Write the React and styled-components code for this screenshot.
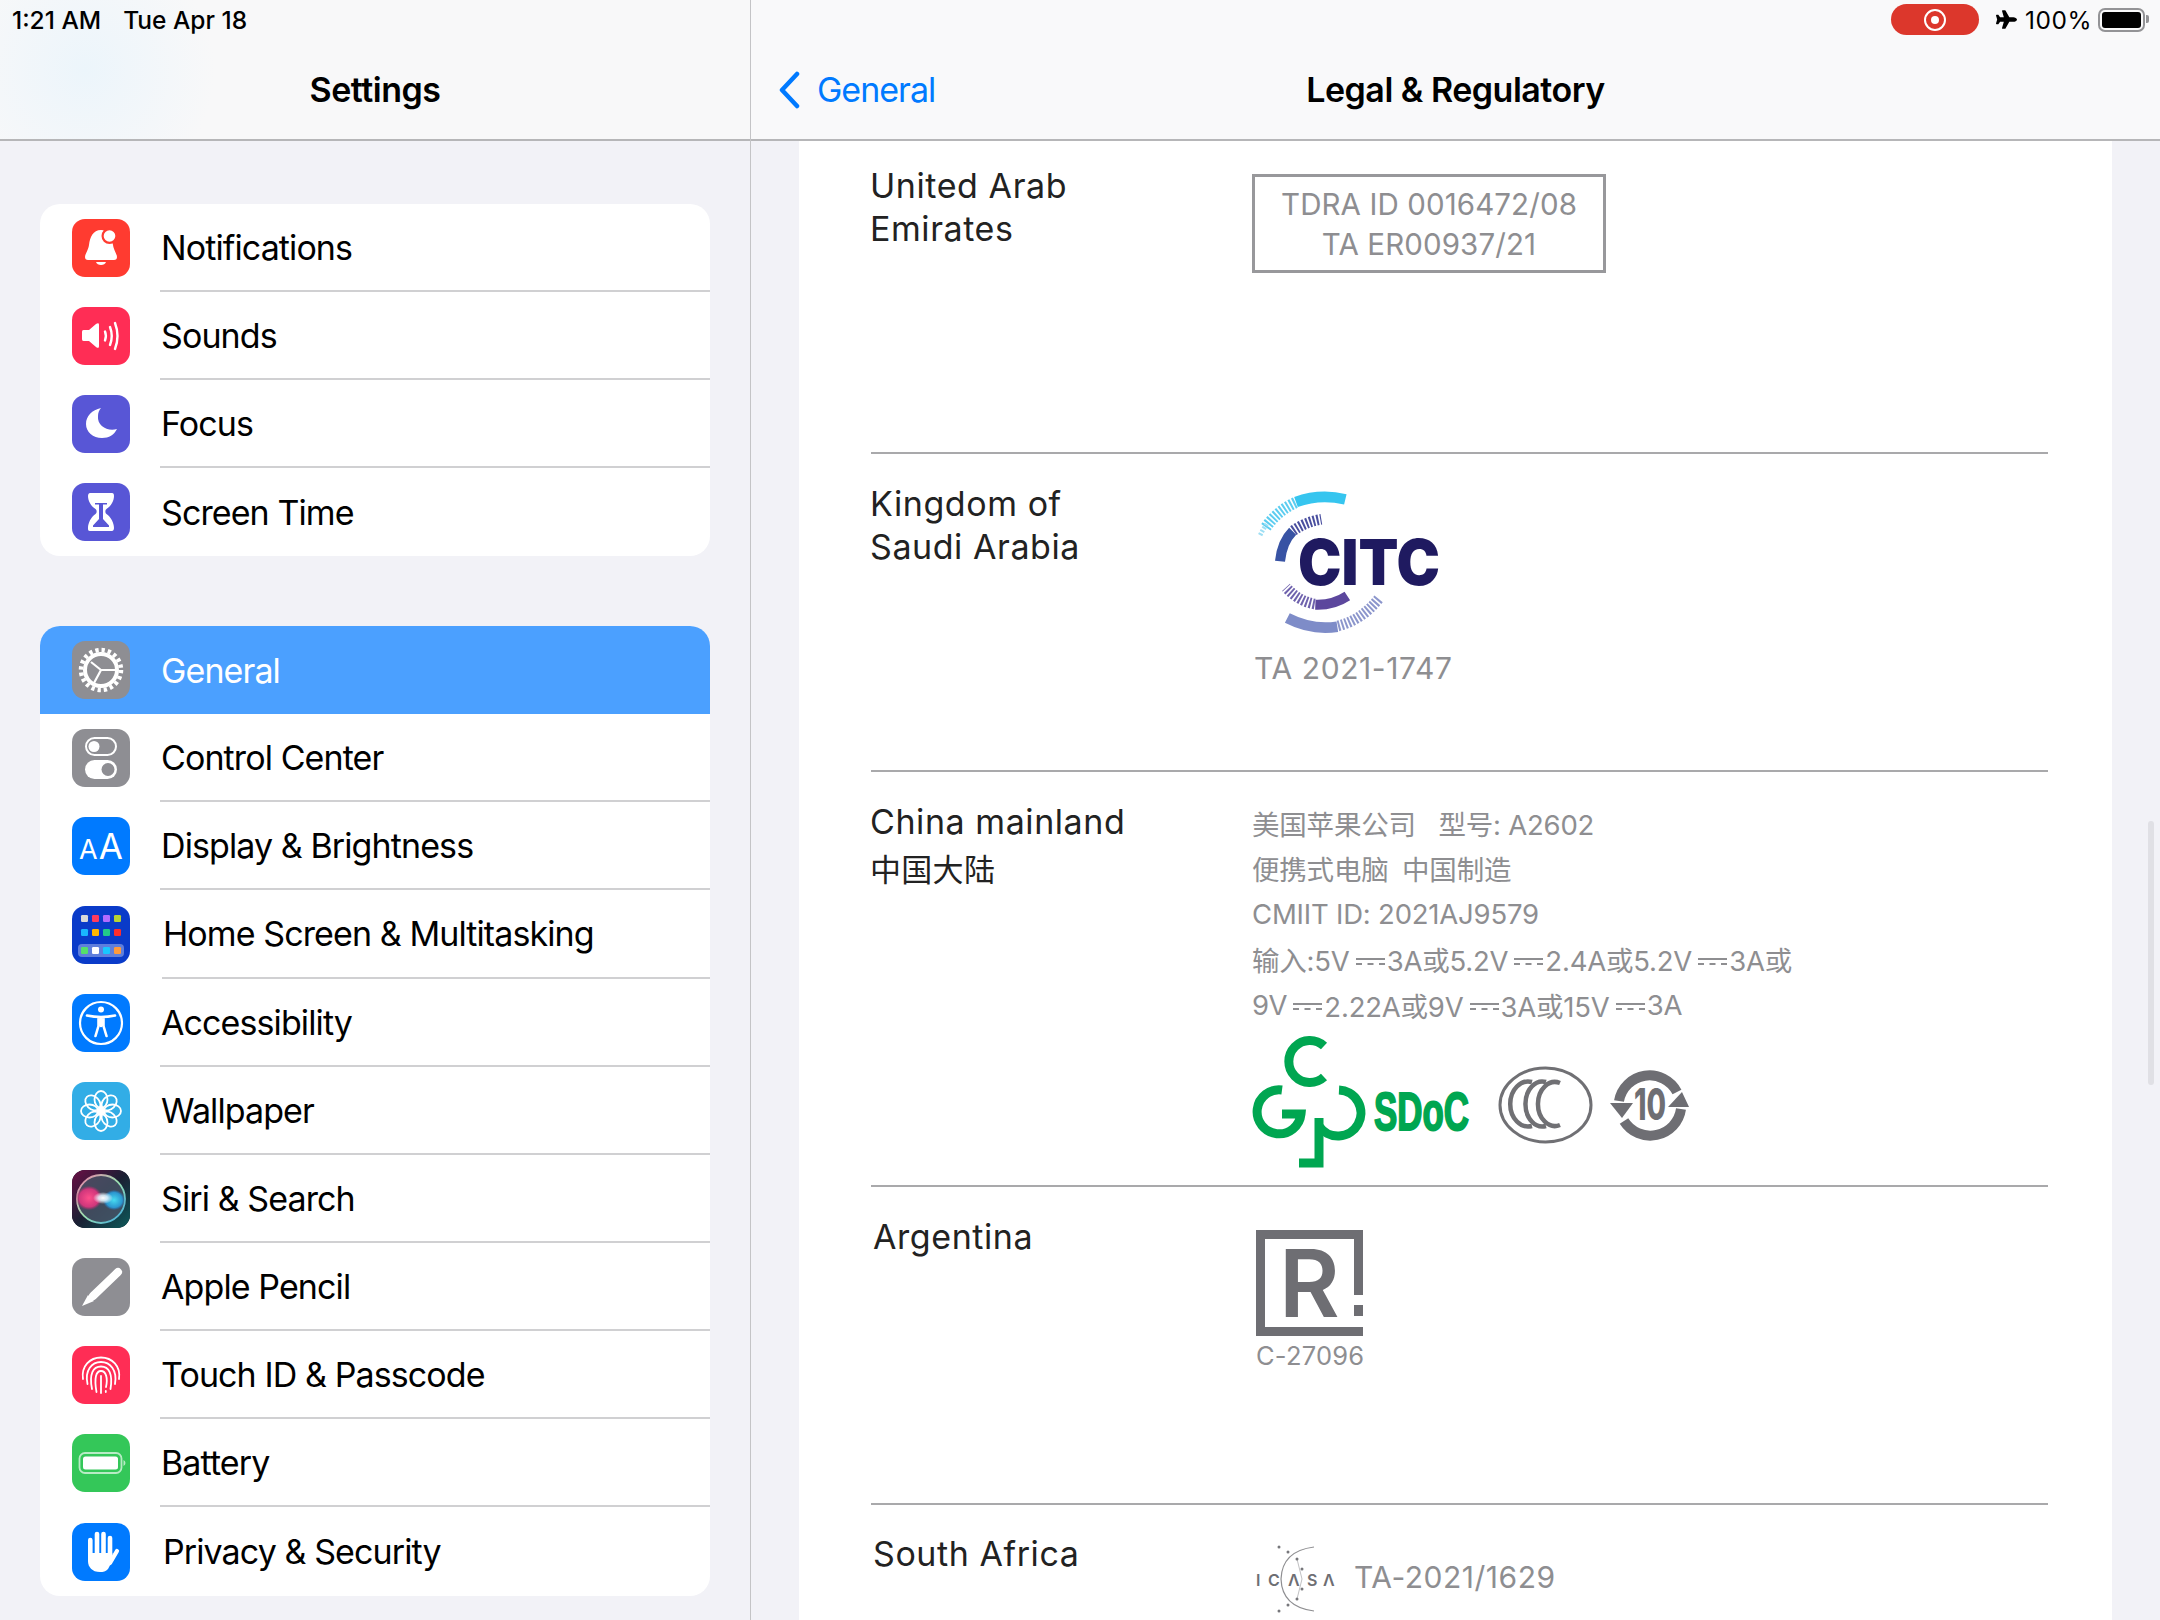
import React from 'react'
import styled, { createGlobalStyle } from 'styled-components'
import { FaPlane } from 'react-icons/fa'

const GlobalStyle = createGlobalStyle`
  html, body { margin: 0; padding: 0; background: #f2f2f7; }
  * { box-sizing: border-box; }
`

const Screen = styled.div`
  position: relative;
  display: flex;
  width: 2160px;
  height: 1620px;
  overflow: hidden;
  background: #f2f2f7;
  font-family: Inter, "Noto Sans CJK SC", sans-serif;
  color: #000;
`
const Sidebar = styled.aside`
  width: 751px;
  flex: none;
  border-right: 1px solid #c4c4c6;
`
const Detail = styled.main`
  flex: 1;
  min-width: 0;
`
const Header = styled.header`
  height: 141px;
  border-bottom: 2px solid #b6b6b8;
  background: ${p => p.$tint
    ? 'radial-gradient(ellipse 130px 130px at 85px 70px, #ecf5fb 0%, rgba(240,246,250,0) 100%), #f8f8f9'
    : '#f9f9fa'};
`
const StatusLine = styled.div`
  height: 40px;
  display: flex;
  align-items: center;
  justify-content: ${p => (p.$end ? 'flex-end' : 'flex-start')};
  padding: ${p => (p.$end ? '0 10px 0 0' : '0 0 0 12px')};
  font-size: 24.5px;
  font-weight: 500;
  letter-spacing: 0;
`
const Clock = styled.span`
  margin-right: 22px;
`
const RecPill = styled.div`
  width: 88px;
  height: 31px;
  margin: -1px 17px 0 0;
  border-radius: 16px;
  background: #dc372c;
  display: flex;
  align-items: center;
  justify-content: center;
`
const RecDot = styled.div`
  width: 22px;
  height: 22px;
  border-radius: 50%;
  border: 2px solid #fff;
  display: flex;
  align-items: center;
  justify-content: center;
  &::after {
    content: '';
    width: 8px;
    height: 8px;
    border-radius: 50%;
    background: #fff;
  }
`
const Plane = styled(FaPlane)`
  width: 21px;
  height: 21px;
  margin: -1px 8px 0 0;
`
const Percent = styled.span`
  margin: 0 6px 0 0;
  font-weight: 400;
  letter-spacing: 0.5px;
`
const BatteryOutline = styled.div`
  position: relative;
  width: 47px;
  height: 24px;
  padding: 2px;
  border: 2px solid #939396;
  border-radius: 7px;
  margin-right: 5px;
  &::before {
    content: '';
    display: block;
    height: 100%;
    background: #000;
    border-radius: 3px;
  }
  &::after {
    content: '';
    position: absolute;
    right: -6px;
    top: 5px;
    width: 3px;
    height: 8px;
    background: #939396;
    border-radius: 0 2px 2px 0;
  }
`
const NavRow = styled.div`
  height: 99px;
  display: grid;
  grid-template-columns: 1fr auto 1fr;
  align-items: center;
`
const NavTitle = styled.h1`
  grid-column: 2;
  margin: 0;
  font-size: 34px;
  font-weight: 600;
  letter-spacing: -0.5px;
`
const BackLink = styled.a`
  grid-column: 1;
  display: flex;
  align-items: center;
  padding-left: 27px;
  gap: 17px;
  font-size: 34px;
  letter-spacing: -1px;
  color: #007aff;
`
const Groups = styled.div`
  display: flex;
  flex-direction: column;
  gap: 70px;
  padding: 63px 40px 0;
`
const Group = styled.section`
  background: #fff;
  border-radius: 20px;
  overflow: hidden;
`
const Row = styled.div`
  height: ${p => p.$h || 88}px;
  display: flex;
  align-items: center;
  padding-left: 32px;
  background: ${p => (p.$active ? '#4ba0ff' : 'transparent')};
  color: ${p => (p.$active ? '#fff' : '#000')};
`
const IconTile = styled.div`
  width: 58px;
  height: 58px;
  flex: none;
  border-radius: 13px;
  overflow: hidden;
  background: ${p => p.$bg};
  display: flex;
  align-items: baseline;
  justify-content: center;
  svg { display: block; }
`
const RowBody = styled.div`
  flex: 1;
  align-self: stretch;
  display: flex;
  align-items: center;
  margin-left: ${p => 30 + (p.$nudge || 0)}px;
  border-bottom: ${p => (p.$last ? '0' : '2px solid #d0d0d2')};
  font-size: 34px;
  letter-spacing: -0.9px;
  padding-left: 1px;
`
const SmallA = styled.span`
  color: #fff;
  font-size: 27px;
  line-height: 58px;
  margin-right: 1px;
`
const BigA = styled.span`
  color: #fff;
  font-size: 35px;
  line-height: 58px;
`
const Page = styled.div`
  margin: 0 48px 0 48px;
  background: #fff;
  height: 1480px;
  padding: 0 64px 0 72px;
`
const Entry = styled.section`
  height: ${p => p.$h}px;
  padding-top: ${p => p.$top}px;
  border-bottom: ${p => (p.$open ? '0' : '2px solid #a9a9ab')};
  display: grid;
  grid-template-columns: 381px 1fr;
  align-items: start;
`
const Region = styled.div`
  margin-left: ${p => (p.$nudge ? 2 : -1)}px;
  font-size: 34px;
  line-height: 42.5px;
  letter-spacing: 0.57px;
  color: #222;
`
const CjkRegion = styled.div`
  margin-top: 3px;
  font-family: "Noto Sans CJK SC", sans-serif;
  font-size: 31px;
  letter-spacing: 0.3px;
`
const CertBox = styled.div`
  margin-top: 9px;
  width: 354px;
  height: 99px;
  border: 3px solid #98989b;
  display: flex;
  flex-direction: column;
  align-items: center;
  justify-content: center;
  font-size: 29.5px;
  line-height: 40px;
  color: #8e8e91;
  letter-spacing: 0.1px;
`
const LogoStack = styled.div`
  margin: ${p => p.$top}px 0 0 ${p => p.$left}px;
  display: flex;
  flex-direction: column;
  align-items: flex-start;
  svg { display: block; overflow: visible; }
`
const CertNumber = styled.div`
  margin: 14px 0 0 -2px;
  font-size: 30px;
  line-height: 36px;
  color: #8e8e91;
  letter-spacing: 0.6px;
`
const SmallNumber = styled.div`
  margin-top: 5px;
  font-size: 25.5px;
  line-height: 30px;
  letter-spacing: 0.2px;
  color: #8e8e91;
`
const LegalBlock = styled.div`
  margin-top: -1px;
`
const LegalLine = styled.div`
  height: 45.5px;
  display: flex;
  align-items: center;
  font-size: 27.5px;
  letter-spacing: -0.2px;
  color: #8e8e91;
  white-space: pre;
  font-family: Inter, "Noto Sans CJK SC", sans-serif;
`
const DcMark = styled.span`
  display: inline-block;
  width: 29px;
  height: 7px;
  margin: 4px 2px 0 6px;
  border-top: 2px solid #8e8e91;
  border-bottom: 2px dashed #8e8e91;
`
const LogoStrip = styled.div`
  display: flex;
  align-items: flex-start;
  margin: 8px 0 0 3px;
  svg { display: block; flex: none; overflow: visible; }
`
const StripItem = styled.div`
  flex: none;
  margin: ${p => p.$top}px 0 0 ${p => p.$left}px;
`
const InlineLogo = styled.div`
  margin: 12px 0 0 4px;
  display: flex;
  align-items: flex-start;
  svg { display: block; flex: none; overflow: visible; }
`
const InlineNumber = styled.div`
  margin: 14px 0 0 16px;
  font-size: 30px;
  line-height: 36px;
  color: #8e8e91;
  letter-spacing: 0.5px;
`
const ScrollThumb = styled.div`
  position: absolute;
  left: 2148px;
  top: 821px;
  width: 6px;
  height: 264px;
  border-radius: 3px;
  background: #e0e0e5;
`

const Tile = ({ bg, children }) => (
  <IconTile $bg={bg}>
    <svg width="58" height="58" viewBox="0 0 58 58">{children}</svg>
  </IconTile>
)

const BellIcon = () => (
  <Tile bg="#ff3b30">
    <path fill="#fff" d="M29 11C21 11 18 18 17 26C16 32 13 35 13 38C13 40 14 41 16 41H42C44 41 45 40 45 38C45 35 42 32 41 26C40 18 37 11 29 11Z" />
    <path fill="#fff" d="M24 43H34C33 47 25 47 24 43Z" />
    <circle cx="37.500" cy="17" r="8" fill="#ff3b30" />
    <circle cx="37.500" cy="17" r="5.800" fill="#fff" />
  </Tile>
)
const SoundIcon = () => (
  <Tile bg="#ff2d55">
    <path fill="#fff" d="M10 25C10 23 11 23 13 23H17L24 17C26 15.500 27 16 27 18V39C27 41 26 41.500 24 40L17 34H13C11 34 10 34 10 32Z" />
    <g fill="none" stroke="#fff" strokeWidth="2.400" strokeLinecap="round">
      <path d="M33 24.500Q34.800 29 33 33.500" />
      <path d="M38 20Q41.500 29 38 38" />
      <path d="M43 16Q48 29 43 42" />
    </g>
  </Tile>
)
const MoonIcon = () => (
  <Tile bg="#5856d6">
    <path fill="#fff" d="M29 13C20 15 14 21 14 29C14 37 21 43 30 43C37 43 42 40 45 34C36 37 25 31 26 21C26 18 27 15 29 13Z" />
  </Tile>
)
const HourglassIcon = () => (
  <Tile bg="#5856d6">
    <path fill="#fff" d="M18 10H40C41.500 10 42 11 42 13C42 18 39 23 34.500 26C33 27 33 30 34.500 31C39 34 42 40 42 45C42 47 41 48 40 48H18C16 48 16 47 16 45C16 40 19 34 23.500 31C25 30 25 27 23.500 26C19 23 16 18 16 13C16 11 17 10 18 10Z" />
    <path fill="#5856d6" d="M23 20H35V21.500H31V36L37 42.500V44H21V42.500L27 36V21.500H23Z" />
  </Tile>
)
const GearIcon = () => (
  <Tile bg="#8e8e93">
    <g fill="none" stroke="#fff">
      <circle cx="29" cy="29" r="20" strokeWidth="4.500" strokeDasharray="3.300 2.980" />
      <circle cx="29" cy="29" r="16" strokeWidth="4" />
      <path strokeWidth="2.200" d="M29 29L19 21M29 29L43 29M29 29L22 42" />
    </g>
  </Tile>
)
const ControlIcon = () => (
  <Tile bg="#8e8e93">
    <rect x="14" y="9" width="30" height="17" rx="8.500" fill="none" stroke="#fff" strokeWidth="2" />
    <circle cx="22" cy="17.500" r="5.500" fill="#fff" />
    <rect x="13" y="31" width="32" height="19" rx="9.500" fill="#fff" />
    <circle cx="36" cy="40.500" r="6.500" fill="#8e8e93" />
  </Tile>
)
const homeCells = [
  ['#d9d9d9', '#ff3b5c', '#b36bff', '#b6d433'],
  ['#19b5ff', '#ffb800', '#22c98a', '#ff2d2d'],
  ['#55e06a', '#ffffff', '#19c8ff', '#ff9a3c'],
]
const HomeIcon = () => (
  <Tile bg="#0a3bc9">
    <rect x="6" y="38" width="46" height="13" rx="4" fill="#fff" opacity="0.35" />
    {homeCells.map((cells, r) =>
      cells.map((c, i) => (
        <rect key={r + '-' + i} x={9 + i * 11} y={[9, 23, 41][r]} width="7" height="7" rx="1.200" fill={c} />
      ))
    )}
  </Tile>
)
const AccessIcon = () => (
  <Tile bg="#007aff">
    <circle cx="29" cy="29" r="21" fill="none" stroke="#fff" strokeWidth="2.200" />
    <circle cx="29" cy="15.500" r="3" fill="#fff" />
    <path fill="none" stroke="#fff" strokeWidth="2.600" strokeLinecap="round" strokeLinejoin="round" d="M15 21.500Q29 24.500 43 21.500M29 23V32M26.500 23.500V32L23.500 42M31.500 23.500V32L34.500 42" />
  </Tile>
)
const petals = [0, 45, 90, 135, 180, 225, 270, 315]
const WallpaperIcon = () => (
  <Tile bg="#32ade6">
    <g fill="none" stroke="#fff" strokeWidth="1.800">
      {petals.map(a => (
        <ellipse key={a} cx="29" cy="17.500" rx="6.500" ry="8.500" transform={`rotate(${a} 29 29)`} />
      ))}
    </g>
    <circle cx="29" cy="29" r="3.500" fill="#fff" />
  </Tile>
)
const SiriIcon = () => (
  <Tile bg="#141a2a">
    <defs>
      <linearGradient id="siriBg" x1="0" y1="0" x2="1" y2="1">
        <stop offset="0" stopColor="#6b0f45" />
        <stop offset="0.5" stopColor="#1a1f33" />
        <stop offset="1" stopColor="#0d5a5a" />
      </linearGradient>
      <linearGradient id="siriRing" x1="0" y1="0" x2="1" y2="1">
        <stop offset="0" stopColor="#f07aa8" />
        <stop offset="0.5" stopColor="#9be0b0" />
        <stop offset="1" stopColor="#3aa6e0" />
      </linearGradient>
      <radialGradient id="siriCore">
        <stop offset="0" stopColor="#fff" />
        <stop offset="0.45" stopColor="#e6f7ff" stopOpacity="0.85" />
        <stop offset="1" stopColor="#fff" stopOpacity="0" />
      </radialGradient>
      <radialGradient id="siriPink">
        <stop offset="0" stopColor="#ff4f8b" />
        <stop offset="0.75" stopColor="#e0357f" stopOpacity="0.9" />
        <stop offset="1" stopColor="#c02a70" stopOpacity="0.1" />
      </radialGradient>
      <radialGradient id="siriCyan">
        <stop offset="0" stopColor="#48dcf0" />
        <stop offset="0.75" stopColor="#2a9fdc" stopOpacity="0.9" />
        <stop offset="1" stopColor="#1c7fd0" stopOpacity="0.1" />
      </radialGradient>
    </defs>
    <rect width="58" height="58" fill="url(#siriBg)" />
    <circle cx="29" cy="29" r="24" fill="#4a5568" opacity="0.8" />
    <circle cx="29" cy="29" r="24" fill="none" stroke="url(#siriRing)" strokeWidth="1.800" />
    <ellipse cx="17" cy="28" rx="13" ry="12" fill="url(#siriPink)" />
    <ellipse cx="42" cy="30" rx="11" ry="10" fill="url(#siriCyan)" />
    <ellipse cx="31" cy="28" rx="10" ry="6" fill="url(#siriCore)" />
  </Tile>
)
const PencilIcon = () => (
  <Tile bg="#8e8e93">
    <path d="M46 14L21 38" fill="none" stroke="#fff" strokeWidth="8" strokeLinecap="round" />
    <path d="M16 37L22 43L10 48Z" fill="#fff" />
  </Tile>
)
const TouchIcon = () => (
  <Tile bg="#ff2d55">
    <g fill="none" stroke="#fff" strokeWidth="1.800" strokeLinecap="round">
      <path d="M11 33C9 20 18 11.500 29 11.500C40 11.500 49 20 47 33" />
      <path d="M15.500 38C12.500 24 20 16 29 16C38 16 45.500 24 43 38" />
      <path d="M20 43C17 28 21 20.500 29 20.500C37 20.500 41 28 38.500 43" />
      <path d="M24.500 46C22 32 24 25 29 25C34 25 36 32 34 41M33.800 45V46" />
      <path d="M29 30V47" />
    </g>
  </Tile>
)
const BatteryIcon = () => (
  <Tile bg="#34c759">
    <rect x="7.500" y="19" width="42" height="20" rx="5.500" fill="none" stroke="#fff" strokeOpacity="0.65" strokeWidth="1.800" />
    <rect x="11" y="22.500" width="35" height="13" rx="2.500" fill="#fff" />
    <path d="M51.500 26V32Q53.500 31 53.500 29Q53.500 27 51.500 26Z" fill="#fff" fillOpacity="0.65" />
  </Tile>
)
const HandIcon = () => (
  <Tile bg="#007aff">
    <g fill="none" stroke="#fff" strokeWidth="4.600" strokeLinecap="round">
      <path d="M18.300 17V34" />
      <path d="M25 11V30" />
      <path d="M31.500 11V30" />
      <path d="M38 15V34" />
      <path d="M38 40L45 28" strokeWidth="4.200" />
    </g>
    <path fill="#fff" d="M16 30H40.300V38L36 46C34 48.500 31 49 28 49C20 49 16 44 16 38Z" />
  </Tile>
)
const AaIcon = () => (
  <IconTile $bg="#007aff">
    <SmallA>A</SmallA>
    <BigA>A</BigA>
  </IconTile>
)

const citcDash = { fill: 'none', strokeDasharray: '6 5' }
const CitcLogo = () => (
  <svg width="186" height="146" viewBox="0 0 558 438">
    <g transform="translate(-78 -58)">
      <path d="M198 94Q270 68 346 86" fill="none" stroke="#36c5ef" strokeWidth="32" />
      <path d="M196 96Q140 122 106 172" {...citcDash} stroke="#5ccdf0" strokeWidth="34" />
      <path d="M110 160Q100 174 88 198" {...citcDash} stroke="#9fdff4" strokeWidth="14" />
      <path d="M150 272Q156 214 188 182" fill="none" stroke="#3853a4" strokeWidth="30" />
      <path d="M190 180Q226 154 274 146" {...citcDash} stroke="#4a4f9f" strokeWidth="32" />
      <path d="M256 402Q310 404 352 376" fill="none" stroke="#5c479d" strokeWidth="30" />
      <path d="M254 400Q206 392 168 350" {...citcDash} stroke="#6f62ad" strokeWidth="32" />
      <path d="M172 442Q246 480 322 468" fill="none" stroke="#7e8cc8" strokeWidth="32" />
      <path d="M324 466Q396 448 448 382" {...citcDash} stroke="#8c96cc" strokeWidth="32" />
      <text x="204" y="344" fontFamily="Inter, sans-serif" fontWeight="900" fontSize="190" fill="#1f1a60" textLength="426" lengthAdjust="spacingAndGlyphs">CITC</text>
    </g>
  </svg>
)
const GreenMark = () => (
  <svg width="110" height="134" viewBox="0 0 110 134">
    <g fill="none" stroke="#00a651" strokeWidth="9">
      <path d="M69 10A21 21 0 1 0 69 41" />
      <path d="M27 54A22 22 0 1 0 46 78H27" />
      <path d="M84 54A23 23 0 1 1 64 90" />
      <path d="M64 82V127H44" />
    </g>
  </svg>
)
const SdocLogo = () => (
  <svg width="96" height="40" viewBox="0 0 96 40">
    <text x="0" y="39" fontFamily="Liberation Sans, sans-serif" fontWeight="700" fontSize="53" fill="#00a651" stroke="#00a651" strokeWidth="2" textLength="95" lengthAdjust="spacingAndGlyphs">SDoC</text>
  </svg>
)
const CccLogo = () => (
  <svg width="95" height="78" viewBox="0 0 95 78">
    <ellipse cx="47.500" cy="39" rx="45.500" ry="37" fill="none" stroke="#707074" strokeWidth="3" />
    <g fill="none" stroke="#707074" strokeWidth="4.500">
      <path d="M34 16A18 22.500 0 1 0 34 60" />
      <path d="M48 16A17 22.500 0 1 0 48 60" />
      <path d="M62 17A17 22 0 1 0 62 59" />
    </g>
  </svg>
)
const TenLogo = () => (
  <svg width="80" height="76" viewBox="0 0 80 76">
    <g fill="none" stroke="#6e6e73" strokeWidth="10">
      <path d="M9 33A31 31 0 0 1 67 24" />
      <path d="M71 41A31 31 0 0 1 14 53" />
    </g>
    <path d="M0 35H23L12 50Z" fill="#6e6e73" />
    <path d="M79 39H58L72 24Z" fill="#6e6e73" />
    <text x="40" y="52" textAnchor="middle" fontFamily="Inter, sans-serif" fontWeight="800" fontSize="44" fill="#6e6e73" textLength="32" lengthAdjust="spacingAndGlyphs">10</text>
  </svg>
)
const RLogo = () => (
  <svg width="107" height="106" viewBox="0 0 107 106">
    <path fill="#6e6e73" d="M0 0H107V65H98V9H9V97H107V106H0Z" />
    <rect x="98" y="75" width="9" height="11" fill="#6e6e73" />
    <text x="23" y="87" fontFamily="Inter, sans-serif" fontWeight="600" fontSize="93" fill="#6e6e73">R</text>
  </svg>
)
const IcasaLogo = () => (
  <svg width="82" height="68" viewBox="0 0 82 68">
    <path d="M58 2Q26 6 25 34Q26 62 58 66" fill="none" stroke="#8e8e91" strokeWidth="1.200" />
    <path d="M41 14L46 34L41 54" fill="none" stroke="#b0b0b3" strokeWidth="0.800" />
    <g fill="#77777b">
      <circle cx="23" cy="2" r="1.500" />
      <circle cx="32" cy="7" r="1.500" />
      <circle cx="41" cy="14" r="1.500" />
      <circle cx="46" cy="24" r="1.500" />
      <circle cx="46" cy="44" r="1.500" />
      <circle cx="41" cy="54" r="1.500" />
      <circle cx="32" cy="60" r="1.500" />
      <circle cx="23" cy="66" r="1.500" />
    </g>
    <g fontFamily="Inter, sans-serif" fontWeight="600" fontSize="16" fill="#6e6e73">
      <text x="0" y="41">I</text>
      <text x="12" y="41">C</text>
      <text x="32" y="41">Λ</text>
      <text x="51" y="41">S</text>
      <text x="67" y="41">Λ</text>
    </g>
  </svg>
)

const topRows = [
  { label: 'Notifications', Icon: BellIcon },
  { label: 'Sounds', Icon: SoundIcon },
  { label: 'Focus', Icon: MoonIcon },
  { label: 'Screen Time', Icon: HourglassIcon, last: true },
]
const mainRows = [
  { label: 'General', Icon: GearIcon, active: true, last: true },
  { label: 'Control Center', Icon: ControlIcon },
  { label: 'Display & Brightness', Icon: AaIcon },
  { label: 'Home Screen & Multitasking', Icon: HomeIcon, nudge: 2, h: 89 },
  { label: 'Accessibility', Icon: AccessIcon },
  { label: 'Wallpaper', Icon: WallpaperIcon },
  { label: 'Siri & Search', Icon: SiriIcon },
  { label: 'Apple Pencil', Icon: PencilIcon },
  { label: 'Touch ID & Passcode', Icon: TouchIcon },
  { label: 'Battery', Icon: BatteryIcon },
  { label: 'Privacy & Security', Icon: HandIcon, nudge: 2, h: 89, last: true },
]

const SettingsGroup = ({ rows }) => (
  <Group>
    {rows.map(({ label, Icon, active, last, nudge, h }) => (
      <Row key={label} $active={active} $h={h}>
        <Icon />
        <RowBody $last={last} $nudge={nudge}>{label}</RowBody>
      </Row>
    ))}
  </Group>
)

export default function App() {
  return (
    <Screen>
      <GlobalStyle />
      <Sidebar>
        <Header $tint>
          <StatusLine>
            <Clock>1:21 AM</Clock>
            <span>Tue Apr 18</span>
          </StatusLine>
          <NavRow>
            <NavTitle>Settings</NavTitle>
          </NavRow>
        </Header>
        <Groups>
          <SettingsGroup rows={topRows} />
          <SettingsGroup rows={mainRows} />
        </Groups>
      </Sidebar>
      <Detail>
        <Header>
          <StatusLine $end>
            <RecPill><RecDot /></RecPill>
            <Plane />
            <Percent>100%</Percent>
            <BatteryOutline />
          </StatusLine>
          <NavRow>
            <BackLink>
              <svg width="22" height="38" viewBox="0 0 22 38">
                <path d="M19 3L4 19L19 35" fill="none" stroke="#007aff" strokeWidth="4.500" strokeLinecap="round" strokeLinejoin="round" />
              </svg>
              General
            </BackLink>
            <NavTitle>Legal &amp; Regulatory</NavTitle>
          </NavRow>
        </Header>
        <Page>
          <Entry $h={313} $top={24}>
            <Region>United Arab<br />Emirates</Region>
            <CertBox>
              <div>TDRA ID 0016472/08</div>
              <div>TA ER00937/21</div>
            </CertBox>
          </Entry>
          <Entry $h={318} $top={29}>
            <Region>Kingdom of<br />Saudi Arabia</Region>
            <LogoStack $top={7} $left={4}>
              <CitcLogo />
              <CertNumber>TA 2021-1747</CertNumber>
            </LogoStack>
          </Entry>
          <Entry $h={415} $top={29}>
            <Region>
              China mainland
              <CjkRegion>中国大陆</CjkRegion>
            </Region>
            <LegalBlock>
              <LegalLine>美国苹果公司   型号: A2602</LegalLine>
              <LegalLine>便携式电脑{'\u2002'}中国制造</LegalLine>
              <LegalLine>CMIIT ID: 2021AJ9579</LegalLine>
              <LegalLine>输入:5V<DcMark />3A或5.2V<DcMark />2.4A或5.2V<DcMark />3A或</LegalLine>
              <LegalLine>9V<DcMark />2.22A或9V<DcMark />3A或15V<DcMark />3A</LegalLine>
              <LogoStrip>
                <GreenMark />
                <StripItem $top={55} $left={9}><SdocLogo /></StripItem>
                <StripItem $top={30} $left={28}><CccLogo /></StripItem>
                <StripItem $top={32} $left={17}><TenLogo /></StripItem>
              </LogoStrip>
            </LegalBlock>
          </Entry>
          <Entry $h={318} $top={29}>
            <Region $nudge>Argentina</Region>
            <LogoStack $top={14} $left={4}>
              <RLogo />
              <SmallNumber>C-27096</SmallNumber>
            </LogoStack>
          </Entry>
          <Entry $h={115} $top={28} $open>
            <Region $nudge>South Africa</Region>
            <InlineLogo>
              <IcasaLogo />
              <InlineNumber>TA-2021/1629</InlineNumber>
            </InlineLogo>
          </Entry>
        </Page>
      </Detail>
      <ScrollThumb />
    </Screen>
  )
}
